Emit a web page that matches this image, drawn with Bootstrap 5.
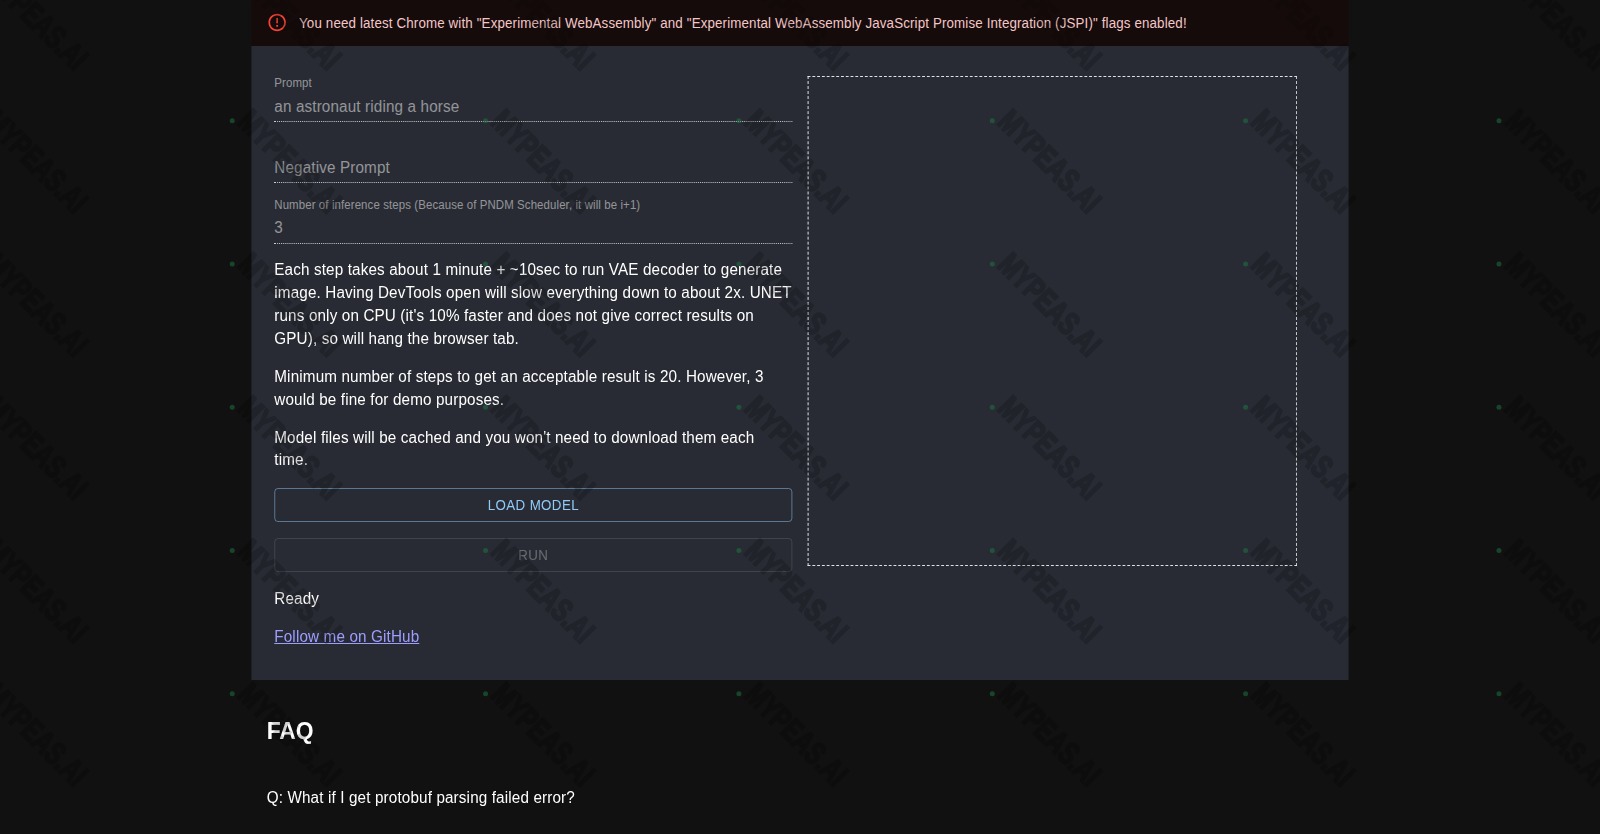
<!DOCTYPE html>
<html lang="en">
<head>
<meta charset="utf-8">
<title>Stable Diffusion in the browser</title>
<link href="https://cdn.jsdelivr.net/npm/bootstrap@5.3.0/dist/css/bootstrap.min.css" rel="stylesheet">
<style>
/* vertical measures are in rem, horizontal ones in px: the page is condensed sideways */
html { font-size: 15.238px; overflow: hidden; }
body { background: #111; color: #fff; font-family: "Liberation Sans", Arial, sans-serif; font-size: 16px; letter-spacing: .00938em; line-height: 1.5rem; height: 834px; overflow: hidden; }
.condensed { width: 1680px; transform: scale(.95238, 1); transform-origin: 0 0; }
.page { width: 1152px; }
.notice { background: #160b0b; color: #f4c7c7; height: 3rem; padding: 0 16px; font-size: 14px; letter-spacing: .01071em; line-height: 1.25rem; }
.notice svg { width: 22px; height: 1.375rem; margin-right: 12px; fill: #f44336; }
.notice span { padding-top: 2px; }
.panel { background: #282b33; padding: 2rem 24px; height: 41.6rem; }
.tool-grid { display: grid; grid-template-columns: 544px 514px; column-gap: 16px; align-items: start; }
.stack { display: flex; flex-direction: column; gap: 1rem; }
.field { height: 3rem; border-bottom: 1px dotted rgba(255,255,255,.75); display: flex; flex-direction: column; justify-content: space-between; color: rgba(255,255,255,.5); }
.field label { font-size: 12px; line-height: .875rem; height: 1rem; padding-top: 1px; letter-spacing: .0094em; }
.field input { background: none; border: 0; padding: 0; margin-bottom: .19rem; height: 1.4375rem; color: inherit; font: inherit; letter-spacing: inherit; outline: 0; }
.field input::placeholder { color: inherit; opacity: 1; }
.canvas-box { border: 1px dashed #e6e6ea; height: 32.125rem; }
.btn-tool { font-size: 14px; line-height: 1.53rem; letter-spacing: .02857em; padding: .38rem 16px .245rem; border-radius: .25rem; height: 2.28125rem; border: 1px solid rgba(144,202,249,.5); color: #90caf9; }
.btn-tool:disabled { color: rgba(255,255,255,.3); border-color: rgba(255,255,255,.12); opacity: 1; }
.follow { color: #9e9eff; }
.faq { padding: 2.27rem 16px 0; }
.faq h2 { font-size: 24px; font-weight: 700; line-height: 2.25rem; margin: 0 0 2.55rem; letter-spacing: 0; }
.marks { left: 0; top: 0; width: 1600px; height: 834px; pointer-events: none; z-index: 5; }
.marks text { font: 700 32px "Liberation Sans", Arial, sans-serif; fill: #000; stroke: #000; stroke-width: 2.2px; letter-spacing: 0; text-rendering: geometricPrecision; }
</style>
</head>
<body>
<div class="condensed">
<main class="page mx-auto">
  <div class="notice d-flex align-items-center" role="alert">
    <svg viewBox="0 0 24 24" preserveAspectRatio="none"><path d="M11 15h2v2h-2zm0-8h2v6h-2zm.99-5C6.47 2 2 6.48 2 12s4.47 10 9.99 10C17.52 22 22 17.52 22 12S17.52 2 11.99 2zM12 20c-4.42 0-8-3.58-8-8s3.58-8 8-8 8 3.58 8 8-3.58 8-8 8z"/></svg>
    <span>You need latest Chrome with "Experimental WebAssembly" and "Experimental WebAssembly JavaScript Promise Integration (JSPI)" flags enabled!</span>
  </div>
  <section class="panel">
    <div class="tool-grid">
      <div class="stack">
        <div class="field"><label for="prompt">Prompt</label><input id="prompt" value="an astronaut riding a horse" disabled></div>
        <div class="field"><label></label><input placeholder="Negative Prompt" disabled></div>
        <div class="field"><label for="steps">Number of inference steps (Because of PNDM Scheduler, it will be i+1)</label><input id="steps" value="3" disabled></div>
        <p class="m-0">Each step takes about 1 minute + ~10sec to run VAE decoder to generate image. Having DevTools open will slow everything down to about 2x. UNET runs only on CPU (it's 10% faster and does not give correct results on GPU), so will hang the browser tab.</p>
        <p class="m-0">Minimum number of steps to get an acceptable result is 20. However, 3 would be fine for demo purposes.</p>
        <p class="m-0">Model files will be cached and you won't need to download them each<br>time.</p>
        <button class="btn btn-tool text-uppercase">Load model</button>
        <button class="btn btn-tool text-uppercase" disabled>Run</button>
        <p class="m-0">Ready</p>
        <p class="m-0"><a class="follow" href="#">Follow me on GitHub</a></p>
      </div>
      <div class="canvas-box"></div>
    </div>
  </section>
  <section class="faq">
    <h2>FAQ</h2>
    <p class="m-0">Q: What if I get protobuf parsing failed error?</p>
  </section>
</main>
</div>
<svg class="marks position-absolute" id="marks" viewBox="0 0 1600 834"></svg>
<script>
// Repeating diagonal watermark laid over the page
let out = '';
for (let r = -1; r < 5; r++) for (let c = -1; c < 6; c++) {
  const x = 232.2 + c * 253.35, y = 120.8 + r * 143.25;
  out += `<g transform="translate(${x} ${y})"><circle r="2.5" fill="#1d7a43" opacity=".5"/><text transform="translate(4 2.5) rotate(45) scale(.735 1)" opacity=".18">MYPEAS.AI</text></g>`;
}
document.getElementById('marks').innerHTML = out;
</script>
<script src="https://cdn.jsdelivr.net/npm/bootstrap@5.3.0/dist/js/bootstrap.bundle.min.js"></script>
</body>
</html>
